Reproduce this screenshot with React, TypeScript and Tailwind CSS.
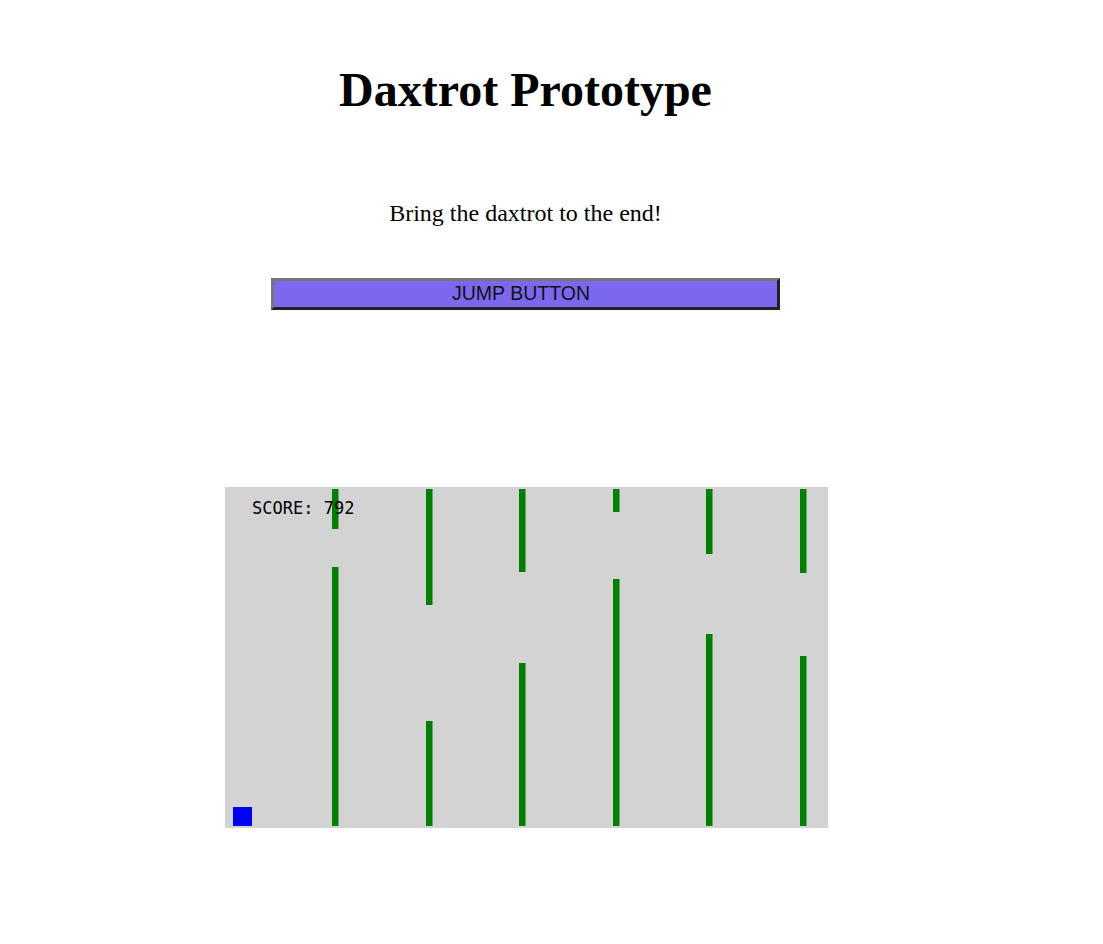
import React from 'react';

type Pipe = { x: number; topEnd: number; bottomStart: number };

// game field, coordinates relative to the canvas
const FIELD_W = 603;
const FIELD_H = 341;

const pipes: Pipe[] = [
  { x: 107, topEnd: 42, bottomStart: 80 },
  { x: 201, topEnd: 118, bottomStart: 234 },
  { x: 294, topEnd: 85, bottomStart: 176 },
  { x: 388, topEnd: 25, bottomStart: 92 },
  { x: 481, topEnd: 67, bottomStart: 147 },
  { x: 575, topEnd: 86, bottomStart: 169 },
];

const GameField: React.FC<{ score: number }> = ({ score }) => (
  <svg width={FIELD_W} height={FIELD_H} className="block bg-[#d3d3d3]">
    {pipes.map((p, i) => (
      <g key={i} fill="#008000">
        <rect x={p.x} y={2} width={6.5} height={p.topEnd - 2} />
        <rect x={p.x} y={p.bottomStart} width={6.5} height={FIELD_H - 2 - p.bottomStart} />
      </g>
    ))}
    <rect x={8} y={320} width={19} height={19} fill="#0000ff" />
    <text
      x={27}
      y={27}
      fontSize={17}
      fill="#000"
      style={{ fontFamily: '"DejaVu Sans Mono", monospace' }}
    >
      SCORE: {score}
    </text>
  </svg>
);

const App: React.FC = () => {
  return (
    <div className="min-h-screen bg-white">
      <div className="w-[1051px] flex flex-col items-center text-black">
        <h1 className="mt-[62px] text-[48px] leading-[55px] font-bold font-['Liberation_Serif',serif]">
          Daxtrot Prototype
        </h1>

        <p className="mt-[82px] text-[24px] leading-[28px] font-['Liberation_Serif',serif]">
          Bring the daxtrot to the end!
        </p>

        <button className="mt-[51px] w-[509px] h-[32px] pr-[9px] bg-[#7b68ee] border-[3px] border-t-[#767676] border-l-[#767676] border-b-[#222] border-r-[#222] text-[19.5px] leading-none text-[#111] font-['Liberation_Sans',sans-serif]">
          JUMP BUTTON
        </button>

        <div className="mt-[177px] ml-[2px]">
          <GameField score={792} />
        </div>
      </div>
    </div>
  );
};

export default App;
